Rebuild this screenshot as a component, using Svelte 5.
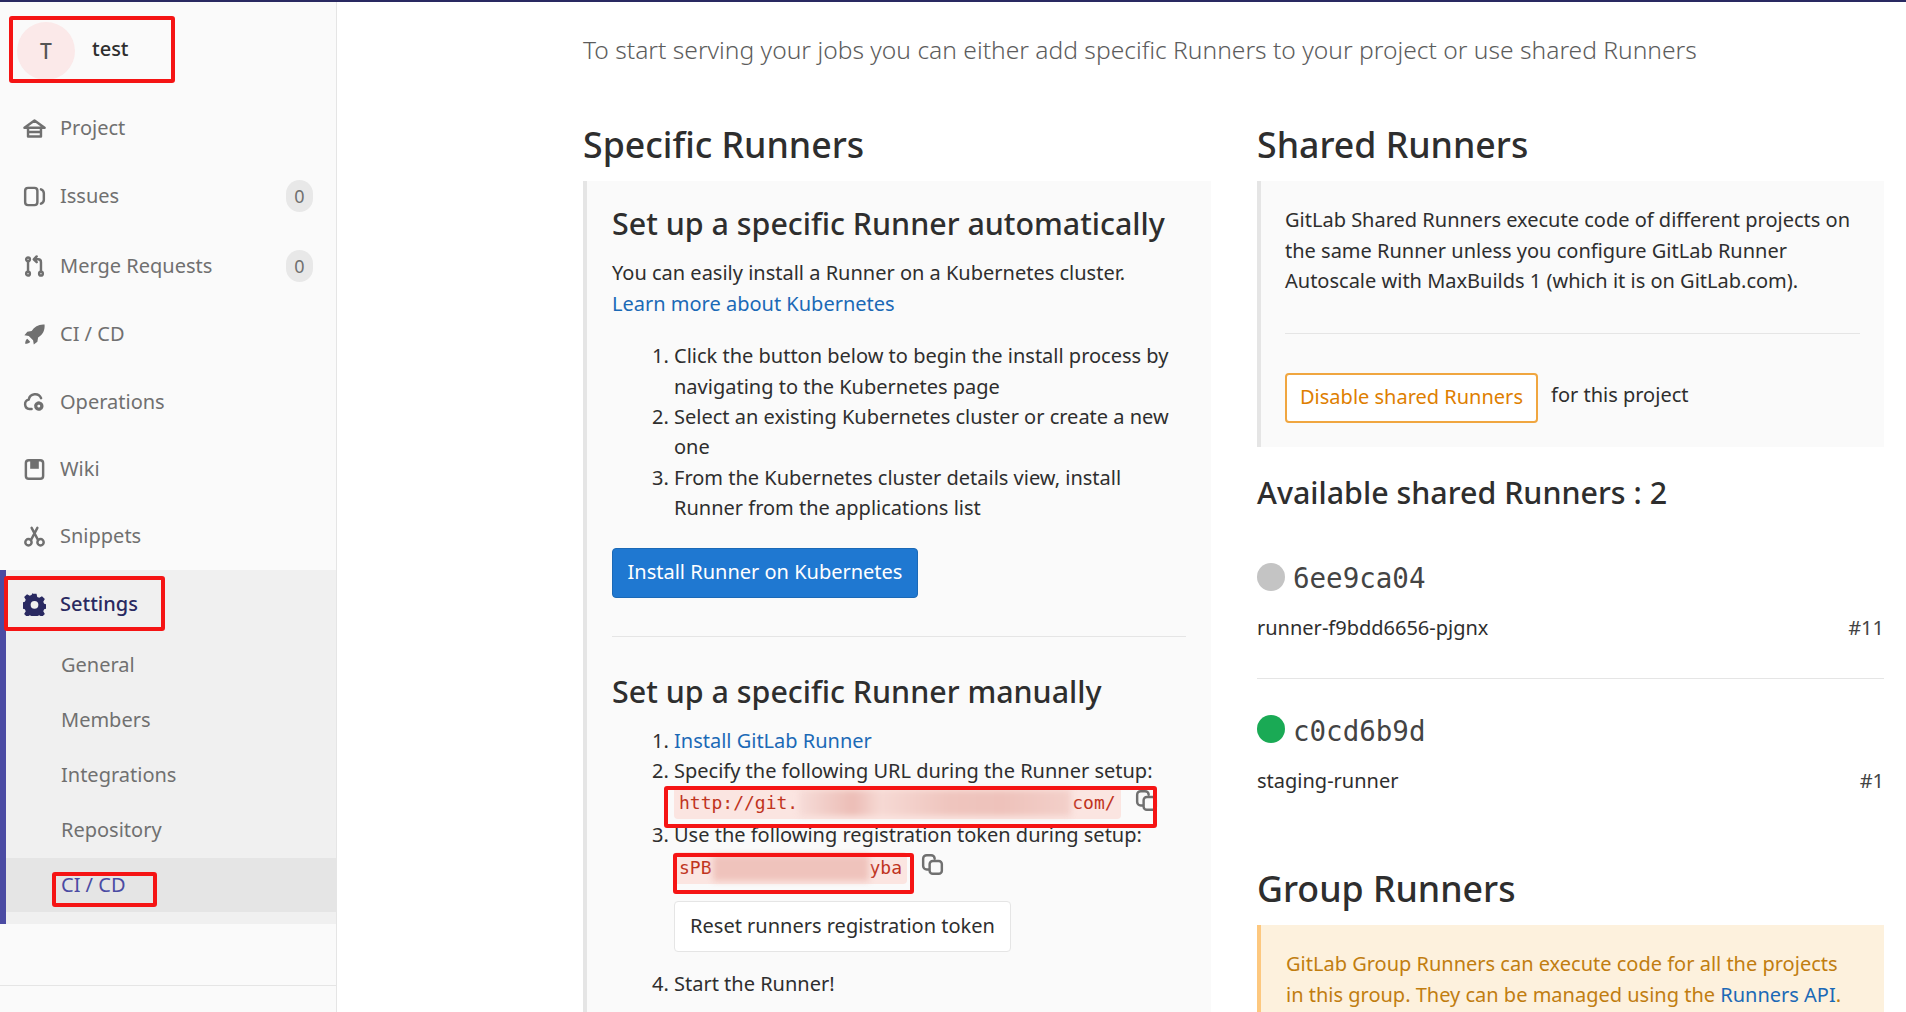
<script>
  const navTop = [
    { label: 'Project', icon: 'home' },
    { label: 'Issues', icon: 'issues', count: 0 },
    { label: 'Merge Requests', icon: 'merge', count: 0 },
    { label: 'CI / CD', icon: 'rocket' },
    { label: 'Operations', icon: 'cloud' },
    { label: 'Wiki', icon: 'book' },
    { label: 'Snippets', icon: 'scissors' }
  ];
  const subItems = ['General', 'Members', 'Integrations', 'Repository'];
  const runners = [
    { id: '6ee9ca04', name: 'runner-f9bdd6656-pjgnx', num: '#11', color: '#c4c4c4' },
    { id: 'c0cd6b9d', name: 'staging-runner', num: '#1', color: '#1aaa55' }
  ];
</script>

{#snippet icon(name)}
  <svg class="icon" viewBox="0 0 16 16" fill="none" stroke="currentColor" stroke-width="1.7" stroke-linejoin="round" stroke-linecap="round">
    {#if name === 'home'}
      <path d="M1 7.500 8 2.500l7 5H1Z" />
      <path d="M3.500 8v5.500h9V8M3.500 10.500h9" />
    {:else if name === 'issues'}
      <rect x="1.500" y="2" width="8.500" height="12" rx="2" />
      <path d="M12.500 3c1.600.6 2 1.600 2 2.800v4.400c0 1.200-.6 2.200-2 2.800" />
    {:else if name === 'merge'}
      <circle cx="3.500" cy="3" r="1.300" />
      <circle cx="3.500" cy="13" r="1.300" />
      <circle cx="12.500" cy="13" r="1.300" />
      <path d="M3.500 4.500v7M12.500 11.500V5c0-1.200-.8-2-2-2H8M9.500 1 7.500 3l2 2" />
    {:else if name === 'rocket'}
      <path fill="currentColor" stroke="none" d="M15 1c-4-.3-7 1.200-9 4.500L3 6 1 8.500l3 .5 3 3 .5 3 2.500-2 .5-3C14 8 15.300 5 15 1Z" />
      <path fill="currentColor" stroke="none" d="M3 11c-1 .6-1.500 1.800-1.500 3.500C3.200 14.500 4.400 14 5 13l-2-2Z" />
    {:else if name === 'cloud'}
      <path d="M6 12.500H4.500A3.300 3.300 0 0 1 4 6a4.500 4.500 0 0 1 8.600-1" />
      <circle cx="11" cy="10.500" r="2.300" stroke-width="2" stroke-dasharray="1.500 .9" />
      <circle cx="11" cy="10.500" r="1.700" stroke-width="1.300" />
    {:else if name === 'book'}
      <rect x="2" y="1.500" width="12" height="13" rx="2" />
      <path fill="currentColor" stroke="none" d="M5 1.500h6v6H5Z" />
    {:else if name === 'scissors'}
      <circle cx="3.800" cy="12" r="2.200" />
      <circle cx="12.200" cy="12" r="2.200" />
      <path d="M5.500 10.500 10 2M10.500 10.500 6 2" />
    {:else if name === 'gear'}
      <path fill="currentColor" fill-rule="evenodd" stroke="none" d="M6.600.6h2.800l.5 2.100 1.400.6 1.900-1.100 2 2-1.100 1.900.6 1.400 2.100.5v2.800l-2.100.5-.6 1.400 1.100 1.900-2 2-1.900-1.100-1.400.6-.5 2.100H6.600l-.5-2.100-1.400-.6-1.900 1.100-2-2 1.100-1.900-.6-1.400-2.100-.5V6.600l2.100-.5.6-1.400-1.100-1.900 2-2 1.900 1.100 1.400-.6.5-2.100ZM8 5.500a2.700 2.700 0 1 0 0 5.400 2.700 2.700 0 0 0 0-5.400Z" />
    {:else if name === 'copy'}
      <path d="M5.500 11.500H4A2.500 2.500 0 0 1 1.500 9V4A2.500 2.500 0 0 1 4 1.500h3A2.500 2.500 0 0 1 9.500 4" />
      <rect x="6" y="5.500" width="8.500" height="9" rx="2.200" />
    {/if}
  </svg>
{/snippet}

<div class="page">
  <div class="topline"></div>
  <div class="shell">
    <aside class="sidebar">
      <div class="context">
        <span class="avatar">T</span>
        <span class="project-name">test</span>
      </div>
      <nav class="nav">
        {#each navTop as item}
          <div class="nav-item">
            {@render icon(item.icon)}
            <span class="nav-label">{item.label}</span>
            {#if item.count !== undefined}
              <span class="badge">{item.count}</span>
            {/if}
          </div>
        {/each}
      </nav>
      <div class="settings-group">
        <div class="nav-item settings-head">
          {@render icon('gear')}
          <span class="nav-label">Settings</span>
        </div>
        {#each subItems as sub}
          <div class="sub-item">{sub}</div>
        {/each}
        <div class="sub-item sub-active">CI / CD</div>
      </div>
      <div class="sidebar-foot"></div>
    </aside>

    <main class="main">
      <p class="intro">To start serving your jobs you can either add specific Runners to your project or use shared Runners</p>
      <div class="columns">
        <section>
          <h3>Specific Runners</h3>
          <div class="panel">
            <h4>Set up a specific Runner automatically</h4>
            <p class="kube-text">You can easily install a Runner on a Kubernetes cluster.<br /><a href="#kube">Learn more about Kubernetes</a></p>
            <ol class="steps">
              <li>Click the button below to begin the install process by navigating to the Kubernetes page</li>
              <li>Select an existing Kubernetes cluster or create a new one</li>
              <li>From the Kubernetes cluster details view, install Runner from the applications list</li>
            </ol>
            <button class="btn-primary">Install Runner on Kubernetes</button>
            <hr class="panel-rule" />
            <h4 class="manual-title">Set up a specific Runner manually</h4>
            <ol class="steps manual">
              <li><a href="#install">Install GitLab Runner</a></li>
              <li>
                Specify the following URL during the Runner setup:
                <div class="code-row">
                  <code class="url">http://git.<span class="smudge smudge-url"></span>com/</code>
                  <span class="copy copy-url">{@render icon('copy')}</span>
                </div>
              </li>
              <li>
                Use the following registration token during setup:
                <div class="code-row">
                  <code>sPB<span class="smudge smudge-token"></span>yba</code>
                  <span class="copy">{@render icon('copy')}</span>
                </div>
                <button class="btn-default">Reset runners registration token</button>
              </li>
              <li class="start">Start the Runner!</li>
            </ol>
          </div>
        </section>

        <section>
          <h3>Shared Runners</h3>
          <div class="panel shared">
            <p class="shared-text">GitLab Shared Runners execute code of different projects on the same Runner unless you configure GitLab Runner Autoscale with MaxBuilds 1 (which it is on GitLab.com).</p>
            <hr class="shared-rule" />
            <div class="disable-row">
              <button class="btn-warning">Disable shared Runners</button>
              <span class="for-project">for this project</span>
            </div>
          </div>
          <h4 class="available">Available shared Runners : 2</h4>
          {#each runners as runner, i}
            <div class="runner" class:last={i === runners.length - 1}>
              <div class="runner-id">
                <span class="status" style="background: {runner.color}"></span>
                <span class="runner-hash">{runner.id}</span>
              </div>
              <div class="runner-meta">
                <span>{runner.name}</span>
                <span class="runner-num">{runner.num}</span>
              </div>
            </div>
          {/each}
          <h3 class="group-title">Group Runners</h3>
          <div class="panel group">
            <p>GitLab Group Runners can execute code for all the projects in this group. They can be managed using the <a href="#api">Runners API</a>.</p>
          </div>
        </section>
      </div>
    </main>
  </div>

  <!-- red annotation boxes drawn on top of the screenshot -->
  <div class="mark mark-context"></div>
  <div class="mark mark-settings"></div>
  <div class="mark mark-cicd"></div>
  <div class="mark mark-url"></div>
  <div class="mark mark-token"></div>
</div>

<style>
  :global(body) {
    margin: 0;
    background: #fff;
  }

  .page {
    position: relative;
    height: 1012px;
    overflow: hidden;
    font-family: "Noto Sans", "Open Sans", sans-serif;
    font-size: 20px;
    line-height: 30.4px;
    color: #2e2e2e;
  }

  .topline {
    height: 2px;
    background: #292961;
  }

  .shell {
    display: flex;
    height: 1010px;
  }

  /* sidebar */
  .sidebar {
    display: flex;
    flex-direction: column;
    width: 336px;
    flex: none;
    background: #fafafa;
    border-right: 1px solid #e5e5e5;
  }

  .context {
    display: flex;
    align-items: center;
    height: 58px;
    padding: 20px 0 0 17px;
    font-size: 20px;
    font-weight: 500;
  }

  .avatar {
    display: flex;
    align-items: center;
    justify-content: center;
    width: 58px;
    height: 58px;
    border-radius: 50%;
    background: #fbe9e9;
    color: #555;
    font-size: 21px;
  }

  .project-name {
    margin-left: 17px;
    margin-top: -3px;
    color: #2e2e2e;
  }

  .nav {
    padding-top: 14px;
  }

  .nav-item {
    display: flex;
    align-items: center;
    height: 68px;
    padding: 0 23px 0 23px;
    color: #707070;
  }

  .nav-item:nth-child(3) {
    margin-top: 2px;
  }

  .nav-item:nth-child(5),
  .nav-item:nth-child(6) {
    margin-bottom: -1px;
  }

  .icon {
    width: 23px;
    height: 23px;
    flex: none;
  }

  .nav-label {
    margin-left: 14px;
    flex: 1;
  }

  .badge {
    display: flex;
    align-items: center;
    justify-content: center;
    width: 27px;
    height: 32px;
    border-radius: 14px;
    background: #e8e8e8;
    color: #707070;
    font-size: 18px;
  }

  .settings-group {
    height: 354px;
    box-sizing: border-box;
    border-left: 6px solid #4b4ba3;
    background: #f0f0f0;
  }

  .settings-head {
    height: 68px;
    padding-left: 17px;
    color: #292961;
    font-weight: 500;
  }

  .sub-item {
    display: flex;
    align-items: center;
    height: 55px;
    padding-left: 55px;
    color: #707070;
  }

  .sub-active {
    height: 54px;
    background: #e5e5e5;
    color: #4b4ba3;
  }

  .sidebar-foot {
    height: 1px;
    margin-top: 61px;
    background: #e5e5e5;
  }

  /* main area */
  .main {
    padding: 33px 22px 0 246px;
    flex: 1;
    min-width: 0;
  }

  .intro {
    margin: 0 0 59px;
    font-size: 24.600px;
    font-weight: 300;
    color: #5c5c5c;
  }

  .columns {
    display: grid;
    grid-template-columns: 628px 627px;
    gap: 46px;
  }

  h3 {
    margin: 0 0 17px;
    font-size: 35.700px;
    line-height: 40px;
    font-weight: 500;
    color: #2e2e2e;
  }

  h4 {
    margin: 0;
    font-size: 30.400px;
    line-height: 36px;
    font-weight: 500;
  }

  a {
    color: #1b69b6;
    text-decoration: none;
  }

  .panel {
    box-sizing: border-box;
    padding: 25px 25px 0 25px;
    height: 900px;
    background: #fafafa;
    border-left: 4px solid #e5e5e5;
  }

  .kube-text {
    margin: 16px 0 22px;
  }

  .steps {
    margin: 0;
    padding-left: 62px;
  }

  button {
    box-sizing: border-box;
    display: block;
    font: inherit;
    border-radius: 4px;
    padding: 0;
  }

  .btn-primary {
    height: 50px;
    width: 306px;
    margin-top: 24px;
    background: #1f78d1;
    border: 1px solid #1b69b6;
    color: #fff;
  }

  .panel-rule {
    margin: 38px 0 37px;
    border: 0;
    border-top: 1px solid #e5e5e5;
  }

  .manual-title {
    margin-bottom: 16px;
  }

  .code-row {
    display: flex;
    height: 34px;
    align-items: center;
  }

  code {
    display: flex;
    align-items: center;
    height: 32px;
    padding: 0 5px;
    border-radius: 4px;
    background: #fbe5e1;
    color: #c0341d;
    font-family: "DejaVu Sans Mono", monospace;
    font-size: 18px;
    white-space: nowrap;
  }

  .smudge {
    height: 26px;
    margin: 0 1px;
    filter: blur(3px);
  }

  .smudge-url {
    width: 272px;
    background: linear-gradient(90deg, #f6dcd8, #ecbdb6 20%, #f6d9d4 30%, #efc5be 55%, #eec2bb 75%, #f3d0ca);
  }

  .smudge-token {
    width: 156px;
    background: #efc3bc;
  }

  .copy {
    display: inline-flex;
    margin-left: 14px;
    margin-top: -6px;
    color: #707070;
  }

  .btn-default {
    height: 51px;
    width: 337px;
    margin-top: 16px;
    background: #fff;
    border: 1px solid #e5e5e5;
    color: #2e2e2e;
    text-align: center;
  }

  .start {
    margin-top: 17px;
  }

  .shared {
    height: 266px;
    padding: 24px 24px 0 24px;
  }

  .shared-text {
    margin: 0;
  }

  .shared-rule {
    margin: 36px 0 39px;
    border: 0;
    border-top: 1px solid #e5e5e5;
  }

  .disable-row {
    display: flex;
    align-items: flex-start;
  }

  .btn-warning {
    width: 253px;
    height: 50px;
    background: #fff;
    border: 2px solid #f0a640;
    color: #de7e00;
  }

  .for-project {
    margin-left: 13px;
    margin-top: 7px;
  }

  .available {
    margin: 28px 0 0;
  }

  .runner {
    box-sizing: border-box;
    border-bottom: 1px solid #e5e5e5;
  }

  .runner-id {
    display: flex;
    align-items: center;
    height: 40px;
    padding-top: 47px;
  }

  .runner + .runner .runner-id {
    padding-top: 32px;
  }

  .runner.last {
    border-bottom: 0;
  }

  .status {
    width: 28px;
    height: 28px;
    border-radius: 50%;
    margin-top: -3px;
  }

  .runner-hash {
    margin-left: 8px;
    font-family: "DejaVu Sans Mono", monospace;
    font-size: 27.500px;
    color: #444;
  }

  .runner-meta {
    display: flex;
    justify-content: space-between;
    padding: 15px 0 34px;
  }

  .runner-num {
    color: #444;
  }

  .group-title {
    margin: 38px 0 17px;
  }

  .group {
    background: #fdf1dd;
    border-left-color: #fdc87f;
    color: #c17d10;
    padding-top: 24px;
  }

  .group p {
    margin: 0;
  }

  /* annotations */
  .mark {
    position: absolute;
    box-sizing: border-box;
    border: 4px solid #f51414;
    border-radius: 3px;
  }

  .mark-context { left: 9px; top: 16px; width: 166px; height: 67px; }
  .mark-settings { left: 4px; top: 576px; width: 161px; height: 55px; }
  .mark-cicd { left: 52px; top: 872px; width: 105px; height: 35px; }
  .mark-url { left: 664px; top: 786px; width: 493px; height: 42px; }
  .mark-token { left: 673px; top: 853px; width: 241px; height: 41px; }
</style>
